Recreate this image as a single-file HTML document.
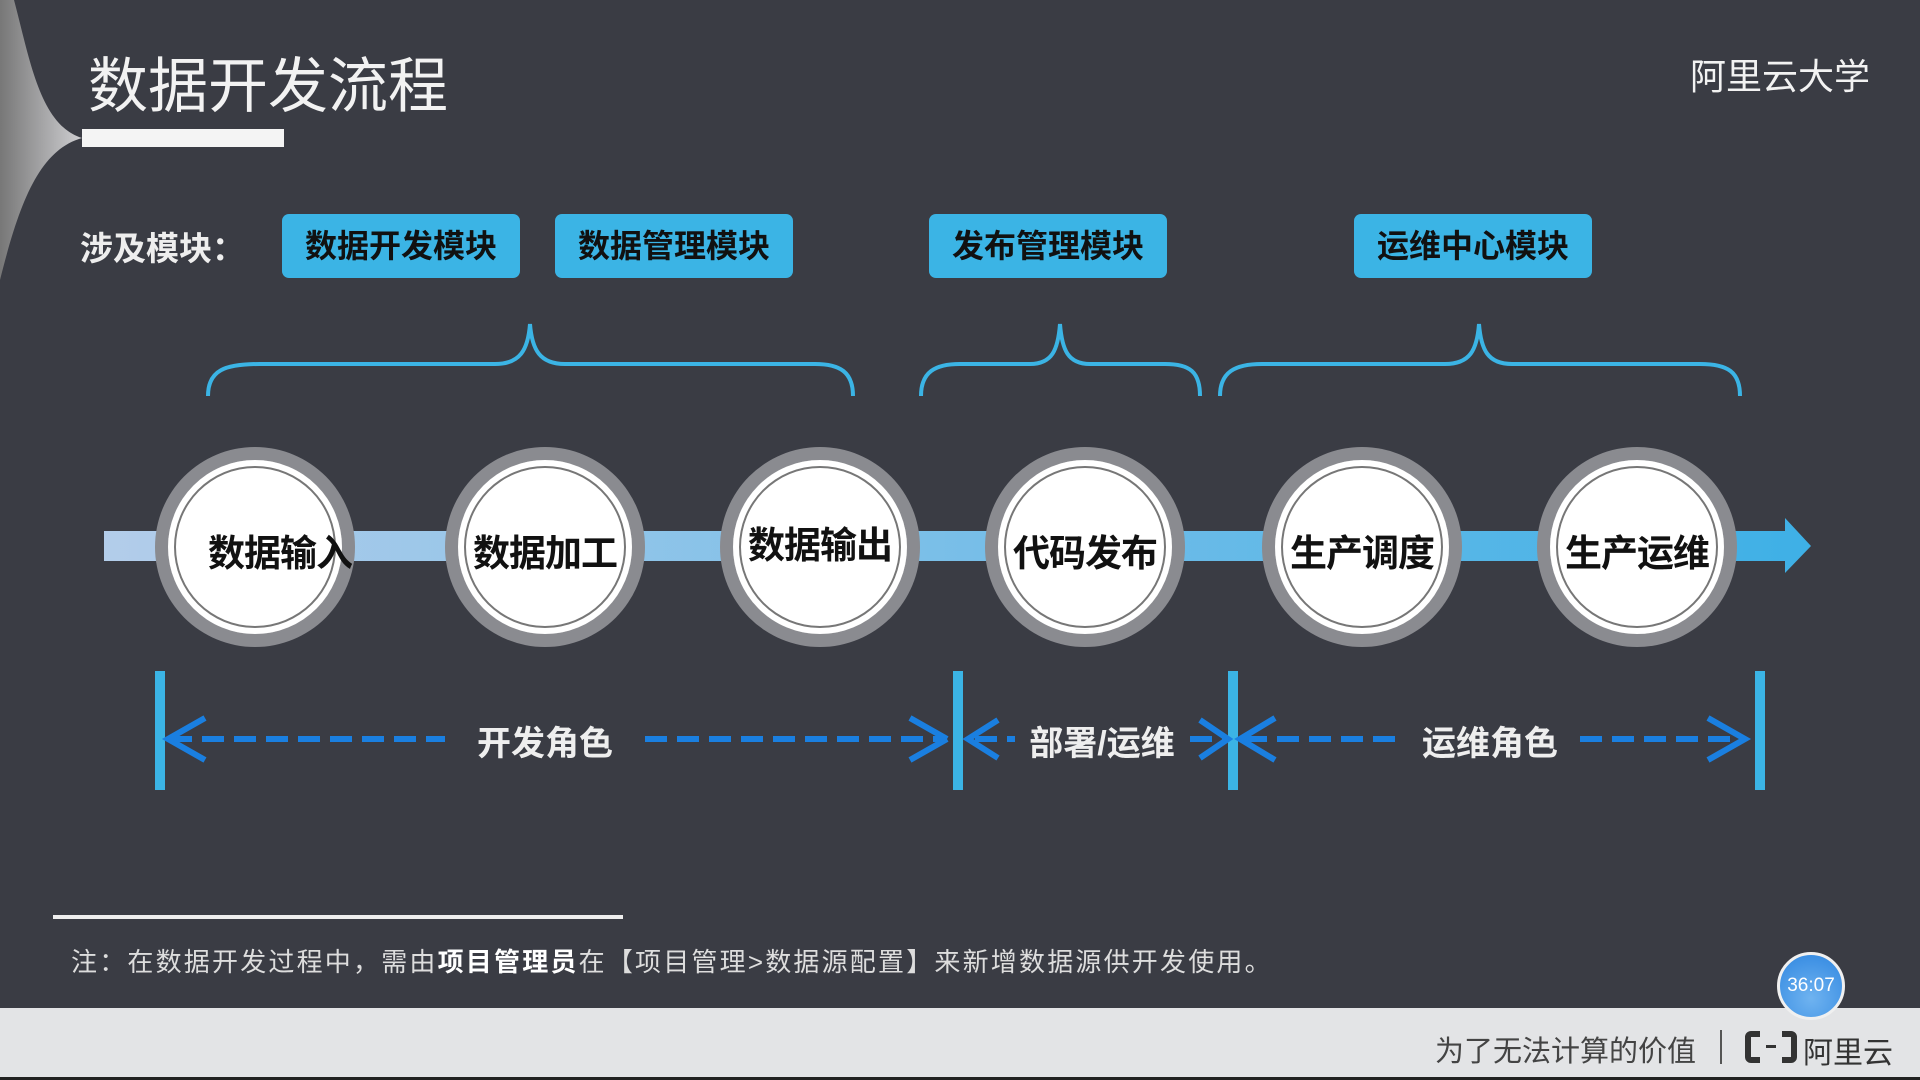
<!DOCTYPE html>
<html><head><meta charset="utf-8"><style>
*{margin:0;padding:0;box-sizing:border-box}
body{width:1920px;height:1080px;background:#3a3c44;position:relative;overflow:hidden;font-family:"Liberation Sans","Noto Sans CJK SC",sans-serif}
.a{position:absolute;white-space:nowrap}
.box{position:absolute;top:214px;height:64px;width:238px;background:#3bb4e5;border-radius:7px;color:#111;font-weight:bold;font-size:32px;text-align:center;line-height:64px}
.c{position:absolute;width:200px;height:200px;border-radius:50%;background:#8a8b90;top:447px}
.c i{position:absolute;left:13px;top:13px;width:174px;height:174px;border-radius:50%;background:#fff;box-shadow:inset 0 0 0 6px #fff,inset 0 0 0 8px #777}
.c b{position:absolute;left:0;right:0;top:76px;text-align:center;font-size:37px;color:#111;letter-spacing:-1px}
.v{position:absolute;top:671px;width:10px;height:119px;background:#3bb4e5}
.lab{position:absolute;top:716px;color:#eee;font-weight:bold;font-size:34px;transform:translateX(-50%)}
</style></head><body>
<svg class="a" style="left:0;top:0" width="120" height="300"><defs><linearGradient id="g" x1="0" x2="1"><stop offset="0" stop-color="#777"/><stop offset="1" stop-color="#cfcfd2"/></linearGradient></defs>
<path d="M0 0 L14 0 C30 60 40 125 82 138 C40 150 20 200 0 280 Z" fill="url(#g)"/></svg>
<div class="a" style="left:88px;top:38px;font-size:60px;color:#f2f2f2">数据开发流程</div>
<div class="a" style="left:82px;top:129px;width:202px;height:18px;background:#f4f4f4"></div>
<div class="a" style="left:1690px;top:48px;font-size:36px;color:#f2f2f2">阿里云大学</div>
<div class="a" style="left:80px;top:222px;font-size:33px;color:#eee;font-weight:bold">涉及模块：</div>
<div class="box" style="left:282px">数据开发模块</div>
<div class="box" style="left:555px">数据管理模块</div>
<div class="box" style="left:929px">发布管理模块</div>
<div class="box" style="left:1354px">运维中心模块</div>
<svg class="a" style="left:0;top:0" width="1920" height="1080" fill="none" stroke="#3bb4e5" stroke-width="4">
<path d="M208 396 C208 370 225 364 260 364 L495 364 C520 364 528 350 530 324 C532 350 540 364 565 364 L815 364 C840 364 853 372 853 396"/>
<path d="M921 396 C921 372 935 364 960 364 L1030 364 C1052 364 1058 350 1060 324 C1062 350 1068 364 1090 364 L1165 364 C1190 364 1200 372 1200 396"/>
<path d="M1220 396 C1220 372 1235 364 1262 364 L1445 364 C1470 364 1477 350 1479 324 C1481 350 1488 364 1512 364 L1700 364 C1728 364 1740 372 1740 396"/>
</svg>
<svg class="a" style="left:0;top:0" width="1920" height="1080"><defs><linearGradient id="b" x1="0" x2="1"><stop offset="0" stop-color="#b3cdea"/><stop offset="1" stop-color="#3eb0e6"/></linearGradient></defs>
<path d="M104 531 L1785 531 L1785 518 L1811 546 L1785 573 L1785 561 L104 561 Z" fill="url(#b)"/></svg>
<div class="c" style="left:155px"><i></i><b style="left:30px;right:-20px">数据输入</b></div>
<div class="c" style="left:445px"><i></i><b>数据加工</b></div>
<div class="c" style="left:720px"><i></i><b style="top:68px">数据输出</b></div>
<div class="c" style="left:985px"><i></i><b>代码发布</b></div>
<div class="c" style="left:1262px"><i></i><b>生产调度</b></div>
<div class="c" style="left:1537px"><i></i><b>生产运维</b></div>
<div class="v" style="left:155px"></div><div class="v" style="left:953px"></div><div class="v" style="left:1228px"></div><div class="v" style="left:1755px"></div>
<svg class="a" style="left:0;top:0" width="1920" height="1080" fill="none" stroke="#1a7fe0" stroke-width="6">
<g stroke-dasharray="22 10"><path d="M170 739 L445 739 M645 739 L945 739 M975 739 L1015 739 M1190 739 L1225 739 M1245 739 L1400 739 M1580 739 L1745 739"/></g>
<path d="M205 718 L168 739 L205 760 M910 718 L947 739 M910 760 L947 739 M998 720 L968 739 L998 758 M1200 720 L1228 739 L1200 758 M1275 718 L1240 739 L1275 760 M1708 718 L1745 739 L1708 760"/>
</svg>
<div class="lab" style="left:545px">开发角色</div>
<div class="lab" style="left:1102px">部署/运维</div>
<div class="lab" style="left:1490px">运维角色</div>
<div class="a" style="left:53px;top:915px;width:570px;height:4px;background:#eee"></div>
<div class="a" style="left:71px;top:942px;font-size:26px;color:#ddd;letter-spacing:2.2px">注：在数据开发过程中，需由<b style="color:#fff">项目管理员</b>在【项目管理&gt;数据源配置】来新增数据源供开发使用。</div>
<div class="a" style="left:0;top:1008px;width:1920px;height:72px;background:#e3e4e6"></div>
<div class="a" style="left:0;top:1077px;width:1920px;height:3px;background:#222"></div>
<div class="a" style="left:1435px;top:1028px;font-size:29px;color:#444">为了无法计算的价值</div>
<div class="a" style="left:1720px;top:1030px;width:2px;height:34px;background:#555"></div>
<div class="a" style="left:1745px;top:1031px;width:52px;height:32px;border:6px solid #333;border-radius:6px"></div>
<div class="a" style="left:1760px;top:1031px;width:22px;height:32px;background:#e3e4e6"></div>
<div class="a" style="left:1766px;top:1045px;width:10px;height:3px;background:#333"></div>
<div class="a" style="left:1803px;top:1028px;font-size:30px;color:#333">阿里云</div>
<div class="a" style="left:1777px;top:952px;width:68px;height:68px;border-radius:50%;background:radial-gradient(circle at 50% 70%,#6fb3f0,#2f86e0);border:3px solid #f0f0f0;color:#fff;font-size:19px;text-align:center;line-height:62px">36:07</div>
</body></html>
